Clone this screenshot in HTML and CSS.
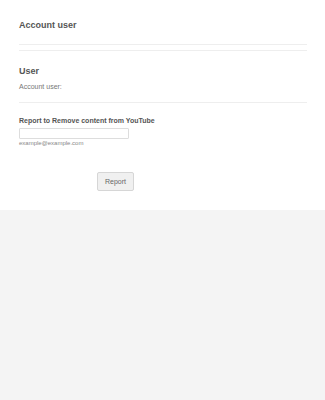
FILE: index.html
```html
<!DOCTYPE html>
<html lang="en">
<head>
    <meta charset="UTF-8">
    <meta name="viewport" content="width=device-width, initial-scale=1.0">
    <title>Account user</title>
    <link rel="stylesheet" href="styles.css">
</head>
<body>
    <div class="page">
        <h1 class="title">Account user</h1>
        <div class="rule"></div>
        <div class="rule second"></div>

        <h2 class="user-title">User</h2>
        <p class="user-label">Account user:</p>
        <div class="rule third"></div>

        <form class="report-form">
            <label for="email" class="field-label">Report to Remove content from YouTube</label>
            <input type="text" id="email" name="email" class="field-input">
            <p class="field-hint">example@example.com</p>
            <button type="submit" class="report-btn">Report</button>
        </form>
    </div>
</body>
</html>
```

FILE: styles.css
```css
body {
    margin: 0;
    font-family: "Liberation Sans", Arial, sans-serif;
    background-color: #f4f4f4; /* grey under the card */
    color: #555;
}
.page {
    background-color: #fff;
    height: 210px;
    box-sizing: border-box;
    padding: 20px 18px 0 19px;
}
.title {
    margin: 0;
    font-size: 9px;
    line-height: 11px;
    font-weight: bold;
    color: #555;
}
.rule {
    height: 0;
    border-top: 1px solid #eee;
    margin-top: 13px;
}
.rule.second {
    margin-top: 5px;
}
.rule.third {
    margin-top: 11px;
}
.user-title {
    margin: 15px 0 0;
    font-size: 9px;
    line-height: 11px;
    font-weight: bold;
    color: #555;
}
.user-label {
    margin: 5px 0 0;
    font-size: 7px;
    line-height: 9px;
    color: #777;
}
.report-form {
    margin-top: 13px;
}
.field-label {
    display: block;
    font-size: 7px;
    line-height: 9px;
    font-weight: bold;
    color: #555;
}
.field-input {
    display: block;
    box-sizing: border-box;
    width: 110px;
    height: 11px;
    margin: 3px 0 0;
    padding: 0 2px;
    border: 1px solid #ddd;
    border-radius: 1px;
    background: #fff;
    font-size: 7px;
}
.field-hint {
    margin: 0;
    font-size: 6px;
    line-height: 8px;
    color: #888;
}
.report-btn {
    display: block;
    box-sizing: border-box;
    width: 37px;
    height: 19px;
    margin: 25px 0 0 78px;
    padding: 0;
    border: 1px solid #d6d6d6;
    border-radius: 2px;
    background-color: #f0f0f0;
    color: #666;
    font-family: "Liberation Sans", Arial, sans-serif;
    font-size: 7px;
    cursor: pointer;
}
```
